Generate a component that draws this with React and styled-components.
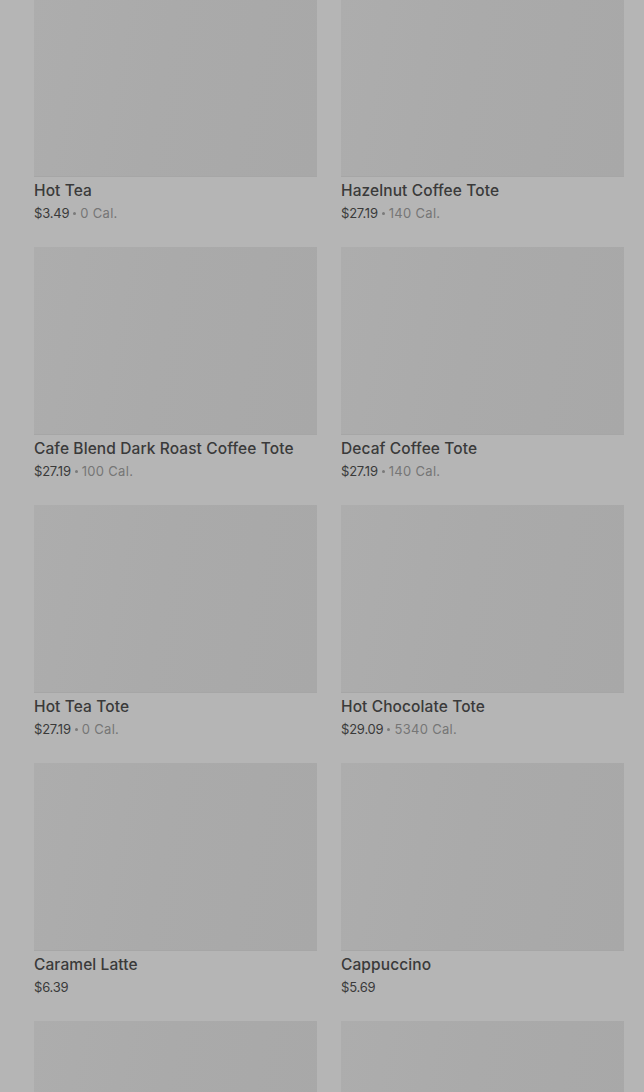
import React from 'react';
import styled, { createGlobalStyle } from 'styled-components';

const GlobalStyle = createGlobalStyle`
  html, body {
    margin: 0;
    padding: 0;
    background: #b5b5b5;
  }
  * {
    box-sizing: border-box;
  }
`;

const items = [
  { name: 'Hot Tea', price: '$3.49', cal: '0 Cal.' },
  { name: 'Hazelnut Coffee Tote', price: '$27.19', cal: '140 Cal.' },
  { name: 'Cafe Blend Dark Roast Coffee Tote', price: '$27.19', cal: '100 Cal.' },
  { name: 'Decaf Coffee Tote', price: '$27.19', cal: '140 Cal.' },
  { name: 'Hot Tea Tote', price: '$27.19', cal: '0 Cal.' },
  { name: 'Hot Chocolate Tote', price: '$29.09', cal: '5340 Cal.' },
  { name: 'Caramel Latte', price: '$6.39' },
  { name: 'Cappuccino', price: '$5.69' },
  { name: '', price: '' },
  { name: '', price: '' },
];

const Page = styled.div`
  width: 644px;
  height: 1092px;
  overflow: hidden;
  background: #b5b5b5;
  font-family: Inter, "Liberation Sans", Arial, sans-serif;
`;

const Grid = styled.div`
  display: grid;
  grid-template-columns: 283px 283px;
  column-gap: 24px;
  row-gap: 25px;
  padding: 0 20px 0 34px;
  margin-top: -11px;
`;

const Card = styled.div`
  display: flex;
  flex-direction: column;
`;

const Thumb = styled.div`
  height: 188px;
  background: linear-gradient(100deg, #adadad 0%, #aaaaaa 45%, #a8a8a8 100%);
  border-bottom: 1px solid #a6a6a6;
`;

const Title = styled.div`
  margin-top: 4px;
  font-size: 15.5px;
  line-height: 20px;
  font-weight: 500;
  color: #3a3a3a;
  letter-spacing: 0.1px;
`;

const Meta = styled.div`
  margin-top: 3px;
  font-size: 13px;
  line-height: 18px;
  color: #3a3a3a;
  display: flex;
  align-items: center;
  gap: 4px;
`;

const Price = styled.span`
  letter-spacing: -0.2px;
`;

const Dot = styled.span`
  width: 3px;
  height: 3px;
  border-radius: 50%;
  background: #7a7a7a;
  margin-top: 1px;
`;

const Cal = styled.span`
  color: #767676;
  letter-spacing: 0.3px;
`;

const App = () => {
  return (
    <Page>
      <GlobalStyle />
      <Grid>
        {items.map((item, i) => (
          <Card key={i}>
            <Thumb />
            {item.name && <Title>{item.name}</Title>}
            {item.price && (
              <Meta>
                <Price>{item.price}</Price>
                {item.cal && (
                  <>
                    <Dot />
                    <Cal>{item.cal}</Cal>
                  </>
                )}
              </Meta>
            )}
          </Card>
        ))}
      </Grid>
    </Page>
  );
};

export default App;
